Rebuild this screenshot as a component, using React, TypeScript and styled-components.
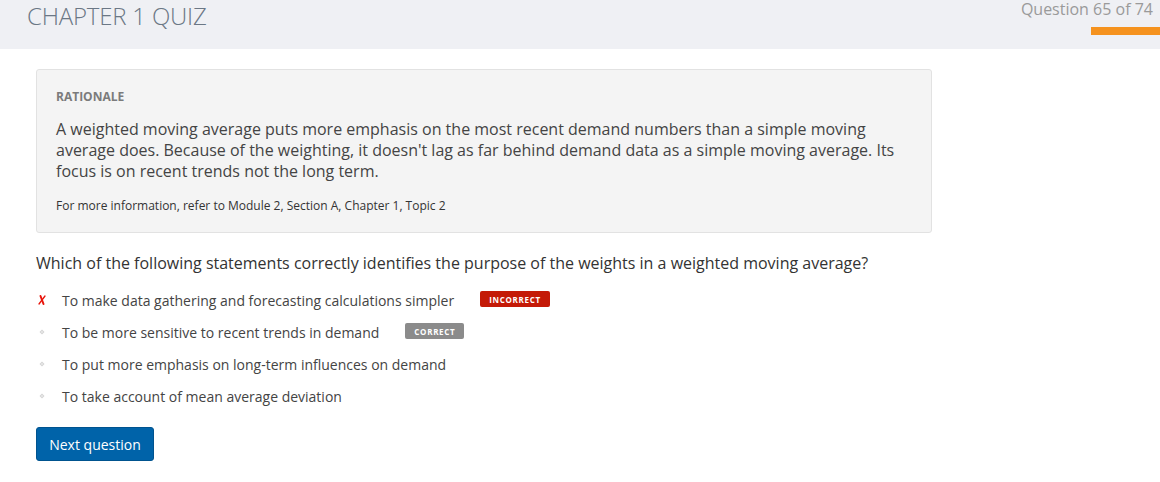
import React from "react";
import styled, { createGlobalStyle } from "styled-components";

const GlobalStyle = createGlobalStyle`
  html, body { margin: 0; padding: 0; background: #fff; }
  body { font-family: "Open Sans", "Liberation Sans", sans-serif; }
  * { box-sizing: border-box; }
`;

const Page = styled.div`
  width: 1160px;
  min-height: 482px;
  background: #fff;
`;

const Header = styled.header`
  height: 49px;
  background: #eff0f4;
  display: flex;
  justify-content: space-between;
  align-items: flex-start;
`;

const Title = styled.h1`
  margin: 0;
  padding: 1px 0 0 27px;
  font-size: 24px;
  line-height: 30px;
  font-weight: 300;
  color: #6b7785;
  letter-spacing: -0.2px;
`;

const Progress = styled.div`
  display: flex;
  flex-direction: column;
  align-items: flex-end;
`;

const ProgressText = styled.div`
  font-size: 16px;
  line-height: 20px;
  color: #9a9a9a;
  padding-right: 7px;
  margin-top: -1px;
`;

const ProgressBar = styled.div`
  margin-top: 8px;
  width: 69px;
  height: 8px;
  background: #f5921e;
`;

const Main = styled.main`
  padding: 20px 0 0 36px;
`;

const RationaleBox = styled.section`
  width: 896px;
  background: #f4f4f4;
  border: 1px solid #e2e2e2;
  border-radius: 3px;
  padding: 19px 20px 18px 19px;
`;

const Label = styled.div`
  font-size: 12px;
  font-weight: 700;
  color: #7b7b7b;
  line-height: 16px;
`;

const Body = styled.p`
  margin: 14px 0 0;
  font-size: 16px;
  line-height: 21px;
  color: #444;
`;

const Reference = styled.p`
  margin: 16px 0 0;
  font-size: 12px;
  line-height: 16px;
  color: #333;
`;

const Question = styled.p`
  margin: 19px 0 0;
  font-size: 16px;
  line-height: 22px;
  color: #333;
`;

const Options = styled.ul`
  list-style: none;
  margin: 10px 0 0;
  padding: 0;
`;

const Option = styled.li`
  display: flex;
  align-items: center;
  height: 32px;
  font-size: 14px;
  color: #444;
`;

const IconCell = styled.span`
  width: 26px;
  display: flex;
  align-items: center;
  padding-left: 1px;
`;

const Badge = styled.span<{ $tone: "bad" | "good" }>`
  margin-left: 26px;
  height: 16px;
  padding: 0 9px;
  border-radius: 2px;
  background: ${(p) => (p.$tone === "bad" ? "#c41a07" : "#8b8b8b")};
  color: #fff;
  font-size: 8px;
  font-weight: 700;
  letter-spacing: 0.7px;
  display: inline-flex;
  align-items: center;
  position: relative;
  top: -1px;
`;

const NextButton = styled.button`
  margin-top: 15px;
  height: 34px;
  width: 118px;
  background: #0063a9;
  border: 1px solid #00538f;
  border-radius: 3px;
  color: #fff;
  font-family: "Open Sans", "Liberation Sans", sans-serif;
  font-size: 14px;
  font-weight: 500;
  padding: 0;
`;

const Cross = () => (
  <svg width="10" height="12" viewBox="0 0 10 12">
    <path d="M3.5 2 L6.5 10" stroke="#e8160c" strokeWidth="2" strokeLinecap="round" />
    <path d="M8 2 L2 10" stroke="#e8160c" strokeWidth="1.3" strokeLinecap="round" />
  </svg>
);

const Diamond = () => (
  <svg width="10" height="10" viewBox="0 0 10 10">
    <path d="M5 2.5 L7.5 5 L5 7.5 L2.5 5 Z" fill="#d4d4d4" />
    <path d="M5 4 L6 5 L5 6 L4 5 Z" fill="#f2f2f2" />
  </svg>
);

const options: { text: string; mark?: "bad"; badge?: "bad" | "good" }[] = [
  { text: "To make data gathering and forecasting calculations simpler", mark: "bad", badge: "bad" },
  { text: "To be more sensitive to recent trends in demand", badge: "good" },
  { text: "To put more emphasis on long-term influences on demand" },
  { text: "To take account of mean average deviation" },
];

export default function App() {
  return (
    <Page>
      <GlobalStyle />
      <Header>
        <Title>CHAPTER 1 QUIZ</Title>
        <Progress>
          <ProgressText>Question 65 of 74</ProgressText>
          <ProgressBar />
        </Progress>
      </Header>
      <Main>
        <RationaleBox>
          <Label>RATIONALE</Label>
          <Body>
            A weighted moving average puts more emphasis on the most recent demand numbers than a simple moving
            average does. Because of the weighting, it doesn't lag as far behind demand data as a simple moving
            average. Its focus is on recent trends not the long term.
          </Body>
          <Reference>For more information, refer to Module 2, Section A, Chapter 1, Topic 2</Reference>
        </RationaleBox>
        <Question>
          Which of the following statements correctly identifies the purpose of the weights in a weighted moving average?
        </Question>
        <Options>
          {options.map((o) => (
            <Option key={o.text}>
              <IconCell>{o.mark === "bad" ? <Cross /> : <Diamond />}</IconCell>
              {o.text}
              {o.badge && <Badge $tone={o.badge}>{o.badge === "bad" ? "INCORRECT" : "CORRECT"}</Badge>}
            </Option>
          ))}
        </Options>
        <NextButton>Next question</NextButton>
      </Main>
    </Page>
  );
}
